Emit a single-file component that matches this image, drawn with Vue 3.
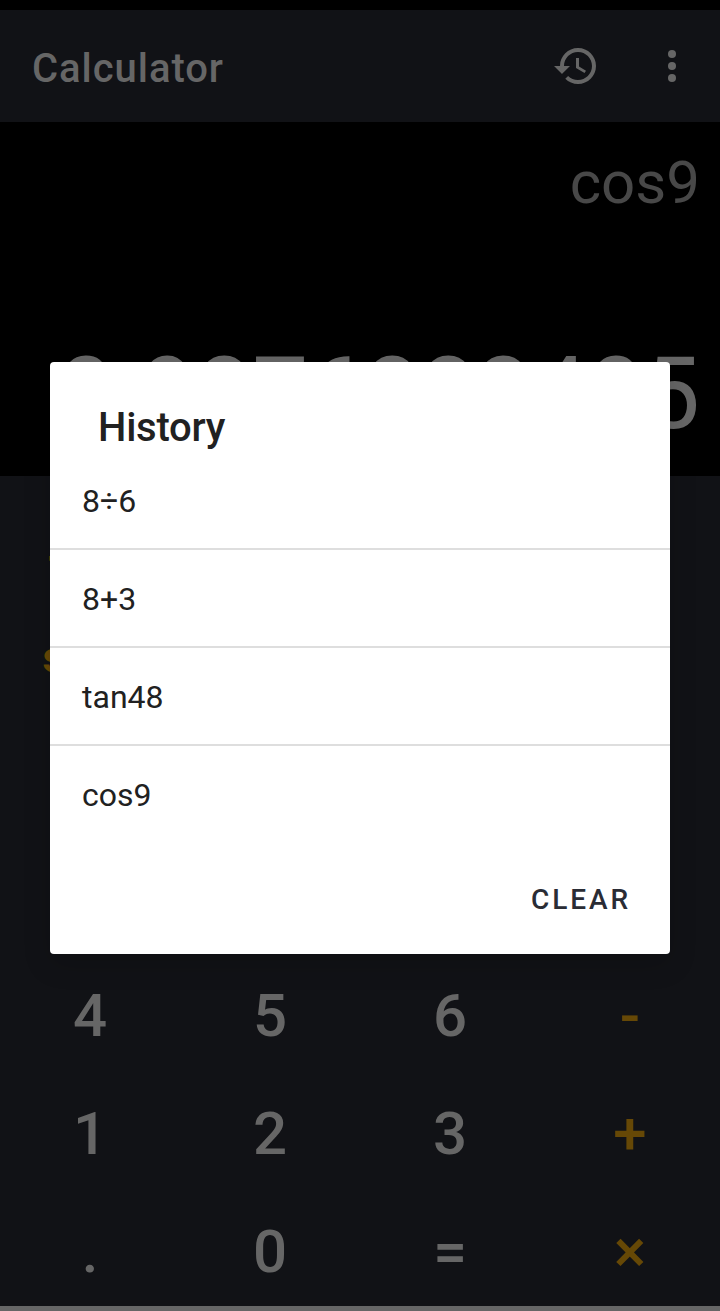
<script setup>
const keys = [
  { label: '4' }, { label: '5' }, { label: '6' }, { label: '-', op: true },
  { label: '1' }, { label: '2' }, { label: '3' }, { label: '+', op: true },
  { label: '.' }, { label: '0' }, { label: '=' }, { label: '×', op: true },
]
const history = ['8÷6', '8+3', 'tan48', 'cos9']
</script>

<template>
  <main class="screen">
    <div class="status"></div>
    <header class="bar">
      <h1 class="title">Calculator</h1>
      <div class="actions">
        <svg class="icon" viewBox="0 0 24 24">
          <path d="M13 3c-4.97 0-9 4.03-9 9H1l3.89 3.89.07.14L9 12H6c0-3.87 3.13-7 7-7s7 3.13 7 7-3.13 7-7 7c-1.93 0-3.68-.79-4.94-2.06l-1.42 1.42C8.27 19.99 10.51 21 13 21c4.97 0 9-4.03 9-9s-4.03-9-9-9zm-1 5v5l4.28 2.54.72-1.21-3.5-2.08V8H12z" />
        </svg>
        <svg class="icon" viewBox="0 0 24 24">
          <circle cx="12" cy="6" r="2" /><circle cx="12" cy="12" r="2" /><circle cx="12" cy="18" r="2" />
        </svg>
      </div>
    </header>

    <section class="display">
      <div class="expression">cos9</div>
      <div class="result">0.9876883405</div>
    </section>

    <section class="functions">
      <span class="fn root">√</span>
      <span class="fn">sin</span>
    </section>

    <section class="keypad">
      <span v-for="k in keys" :key="k.label" class="key" :class="{ op: k.op }">{{ k.label }}</span>
    </section>
    <div class="navbar"></div>

    <div class="dialog">
      <h2 class="heading">History</h2>
      <ul class="list">
        <li v-for="item in history" :key="item" class="item">{{ item }}</li>
      </ul>
      <div class="buttons"><span class="clear">CLEAR</span></div>
    </div>
  </main>
</template>

<style>
body {
  background: #111216;
}
</style>

<style scoped>
.screen {
  position: relative;
  display: flex;
  flex-direction: column;
  width: 720px;
  height: 1311px;
  overflow: hidden;
  background: #111216;
  color: #666;
  font-family: Roboto, sans-serif;
}
.status {
  height: 10px;
  background: #000;
}
.bar {
  display: flex;
  justify-content: space-between;
  align-items: center;
  height: 112px;
  padding: 0 24px 0 32px;
  box-sizing: border-box;
}
.title {
  margin: 4px 0 0;
  font-size: 40px;
  font-weight: 500;
  letter-spacing: 0.95px;
}
.actions {
  display: flex;
  gap: 48px;
}
.icon {
  width: 48px;
  height: 48px;
  fill: #666;
}
.display {
  display: flex;
  flex-direction: column;
  align-items: flex-end;
  height: 354px;
  padding: 20px 20px 0 0;
  box-sizing: border-box;
  background: #000;
}
.expression {
  height: 192px;
  font-size: 60px;
  line-height: 82px;
  color: #484848;
}
.result {
  font-size: 99.6px;
  line-height: 120px;
}
.functions {
  display: flex;
  flex-direction: column;
  height: 481px;
  padding-top: 5px;
  box-sizing: border-box;
}
.fn {
  width: 144px;
  height: 118px;
  box-sizing: border-box;
  font-size: 42px;
  font-weight: 700;
  letter-spacing: 1px;
  line-height: 118px;
  text-align: center;
  color: #664806;
}
.root {
  padding-left: 48px;
  font-size: 44px;
  line-height: 152px;
  text-align: left;
}
.keypad {
  display: grid;
  grid-template-columns: repeat(4, 1fr);
  grid-auto-rows: 118px;
  height: 349px;
}
.key {
  font-size: 60px;
  font-weight: 500;
  line-height: 118px;
  text-align: center;
}
.op {
  color: #664806;
}
.navbar {
  height: 5px;
  background: #666;
}
.dialog {
  position: absolute;
  top: 362px;
  left: 50px;
  display: flex;
  flex-direction: column;
  width: 620px;
  height: 592px;
  border-radius: 4px;
  background: #fff;
  color: #212121;
  box-shadow: 0 10px 28px rgba(0, 0, 0, 0.16);
}
.heading {
  margin: 0;
  padding: 38px 48px 0;
  height: 90px;
  box-sizing: border-box;
  font-size: 40px;
  font-weight: 500;
  letter-spacing: -0.25px;
  line-height: 56px;
}
.list {
  margin: 0;
  padding: 0;
  list-style: none;
}
.item {
  height: 98px;
  padding: 0 32px;
  box-sizing: border-box;
  border-bottom: 2px solid #dedede;
  font-size: 32px;
  line-height: 98px;
}
.item:last-child {
  border-bottom: 0;
}
.buttons {
  display: flex;
  justify-content: flex-end;
  padding: 40px 39px 0;
}
.clear {
  font-size: 28px;
  font-weight: 500;
  line-height: 32px;
  letter-spacing: 2.9px;
  color: #2a2c35;
}
</style>
